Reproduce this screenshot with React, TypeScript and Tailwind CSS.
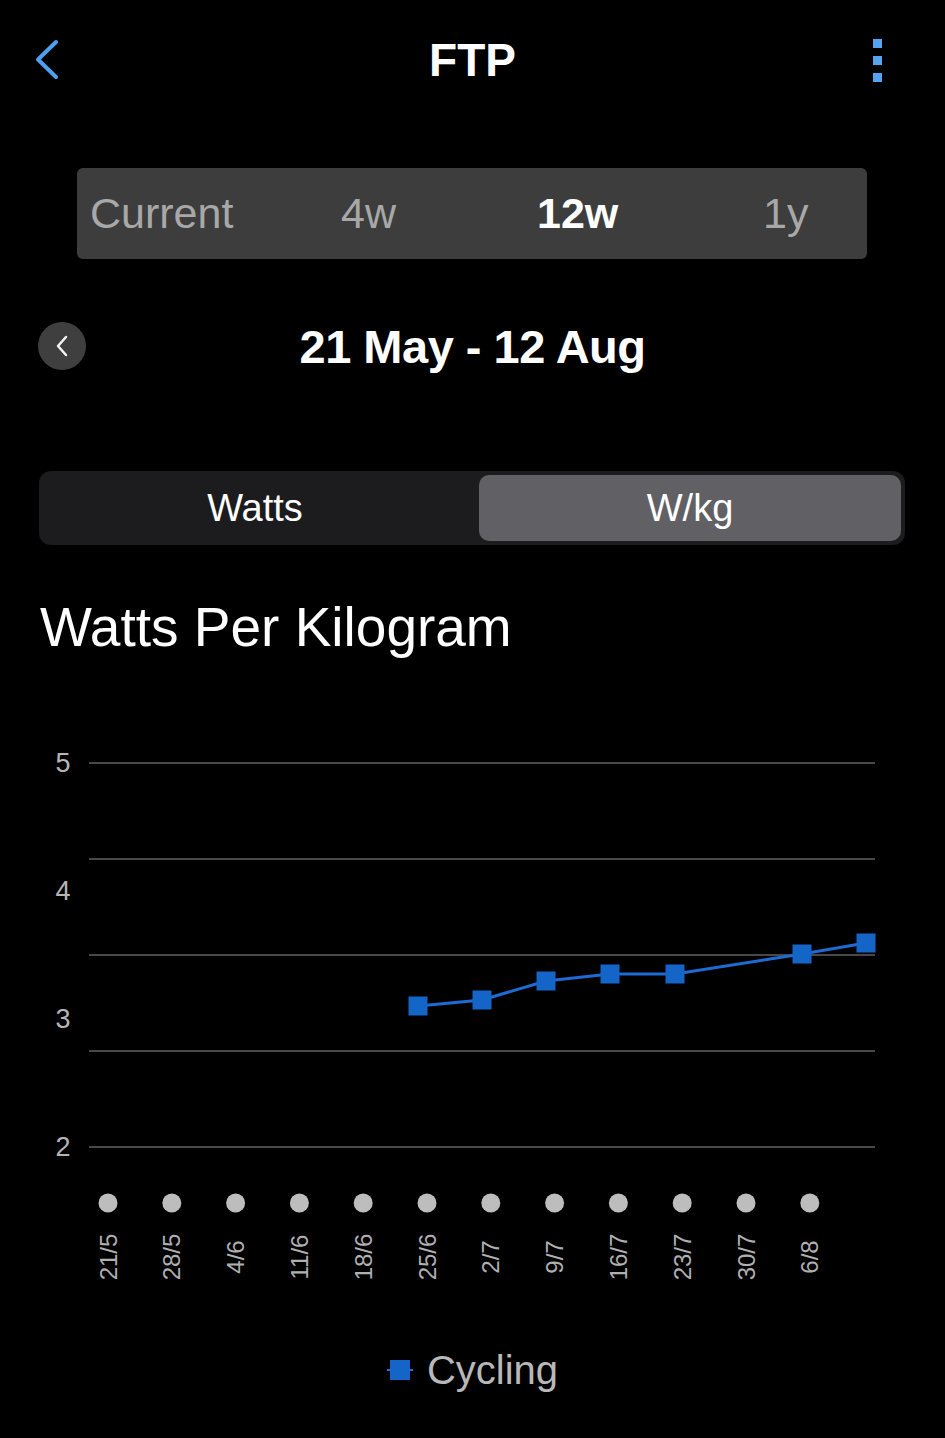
import React from "react";

const dates = ["21/5", "28/5", "4/6", "11/6", "18/6", "25/6", "2/7", "9/7", "16/7", "23/7", "30/7", "6/8"];

// wkg points, x in px within the chart svg
const points: [number, number][] = [
  [418, 306],
  [482, 300],
  [546, 281],
  [610, 274],
  [675, 274],
  [802, 254],
  [866, 243],
];

const gridY = [63, 159, 255, 351, 447];
const yLabels = [
  { v: "5", y: 72 },
  { v: "4", y: 200 },
  { v: "3", y: 328 },
  { v: "2", y: 456 },
];

function Chart() {
  const dotX = (i: number) => 108 + i * 63.8;
  return (
    <svg width="945" height="600" viewBox="0 0 945 600" className="block">
      {gridY.map((y) => (
        <line key={y} x1="89" x2="875" y1={y} y2={y} stroke="#484848" strokeWidth="2" />
      ))}
      {yLabels.map((l) => (
        <text
          key={l.v}
          x="63"
          y={l.y}
          textAnchor="middle"
          fill="#b5b5b5"
          fontSize="27"
          fontFamily="'Liberation Sans', Arial, sans-serif"
        >
          {l.v}
        </text>
      ))}
      <polyline
        points={points.map((p) => p.join(",")).join(" ")}
        fill="none"
        stroke="#1d6bd3"
        strokeWidth="3"
      />
      {points.map(([x, y]) => (
        <rect key={x} x={x - 9.5} y={y - 9.5} width="19" height="19" fill="#1565c9" />
      ))}
      {dates.map((d, i) => (
        <g key={d}>
          <circle cx={dotX(i)} cy="503" r="9.5" fill="#bdbdbd" />
          <text
            x={dotX(i)}
            y="557"
            transform={`rotate(-90 ${dotX(i)} 557)`}
            textAnchor="middle"
            dominantBaseline="central"
            fill="#b0b0b0"
            fontSize="24"
            fontFamily="'Liberation Sans', Arial, sans-serif"
          >
            {d}
          </text>
        </g>
      ))}
    </svg>
  );
}

export default function App() {
  return (
    <div className="bg-black w-full min-h-[1438px] text-white font-['Liberation_Sans',Arial,sans-serif] overflow-hidden">
      {/* header */}
      <div className="h-[120px] grid grid-cols-3 items-center">
        <div className="pl-[35px]">
          <svg width="24" height="42" viewBox="0 0 24 42" className="block">
            <path d="M21 3 L3 20.5 L21 38" fill="none" stroke="#4f9ff0" strokeWidth="4" strokeLinecap="round" strokeLinejoin="round" />
          </svg>
        </div>
        <h1 className="text-center text-[46px] font-bold leading-none">FTP</h1>
        <div className="flex justify-end pr-[63px]">
          <div className="flex flex-col gap-[8px]">
            <span className="block w-[9px] h-[9px] bg-[#55a4f2]"></span>
            <span className="block w-[9px] h-[9px] bg-[#55a4f2]"></span>
            <span className="block w-[9px] h-[9px] bg-[#55a4f2]"></span>
          </div>
        </div>
      </div>

      {/* range selector */}
      <div className="mt-[48px] ml-[77px] mr-[78px] h-[91px] rounded-md bg-[#3d3d3d] flex items-center text-[43px] leading-none">
        <span className="w-[264px] pl-[13px] text-[#a8a8a8]">Current</span>
        <span className="w-[196px] text-[#a8a8a8]">4w</span>
        <span className="w-[226px] font-bold text-white">12w</span>
        <span className="text-[#a8a8a8]">1y</span>
      </div>

      {/* date row */}
      <div className="mt-[63px] h-[48px] grid grid-cols-[86px_1fr_86px] items-center">
        <div className="ml-[38px] w-[48px] h-[48px] rounded-full bg-[#3f3f3f] flex items-center justify-center">
          <svg width="14" height="22" viewBox="0 0 14 22">
            <path d="M11 2 L3 11 L11 20" fill="none" stroke="#f2f2f2" strokeWidth="2.5" strokeLinecap="round" strokeLinejoin="round" />
          </svg>
        </div>
        <div className="text-center text-[47px] font-bold leading-none tracking-[-0.5px]">21 May - 12 Aug</div>
        <div></div>
      </div>

      {/* units toggle */}
      <div className="mt-[101px] ml-[39px] mr-[40px] h-[74px] p-[4px] rounded-[12px] bg-[#1c1c1e] grid grid-cols-[436px_1fr] text-[38px] leading-none">
        <div className="flex items-center justify-center pr-[12px]">Watts</div>
        <div className="flex items-center justify-center rounded-[10px] bg-[#616165]">W/kg</div>
      </div>

      <h2 className="mt-[55px] ml-[40px] text-[55px] leading-none">Watts Per Kilogram</h2>

      <div className="mt-[45px]">
        <Chart />
      </div>

      {/* legend */}
      <div className="mt-[50px] h-[40px] flex items-center justify-center gap-[14px]">
        <svg width="26" height="22" viewBox="0 0 26 22">
          <line x1="0" x2="26" y1="11" y2="11" stroke="#1d6bd3" strokeWidth="2" />
          <rect x="3" y="1" width="20" height="20" fill="#1565c9" />
        </svg>
        <span className="text-[40px] leading-none text-[#b8b8b8]">Cycling</span>
      </div>
    </div>
  );
}
